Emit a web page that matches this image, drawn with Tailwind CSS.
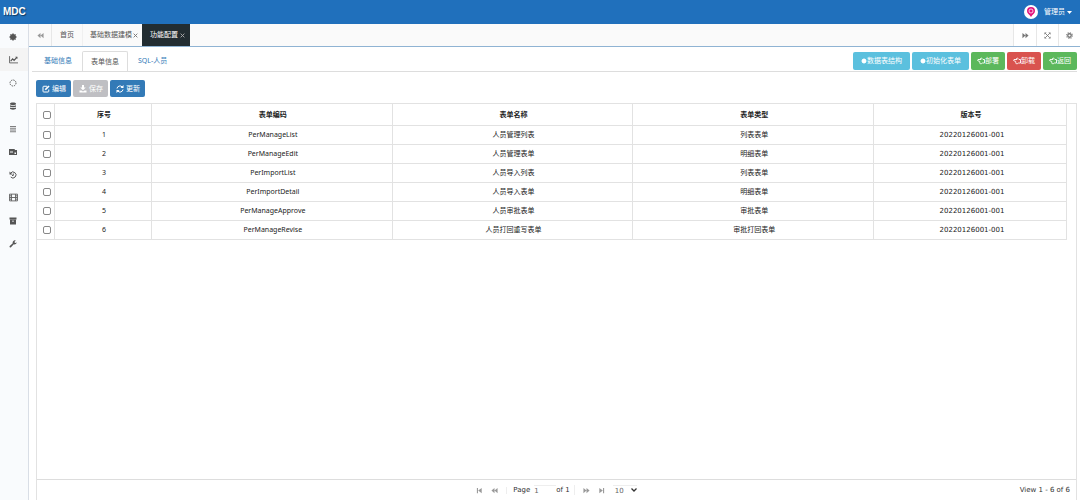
<!DOCTYPE html>
<html lang="zh-CN">
<head>
    <meta charset="UTF-8">
    <link rel="icon" href="data:,">
    <meta name="viewport" content="width=device-width, initial-scale=1.0">
    <title>MDC - 功能配置</title>
    <script src="https://cdn.jsdelivr.net/npm/@tailwindcss/browser@4"></script>
</head>
<body class="h-screen flex flex-col overflow-hidden bg-white text-[7px] leading-[10px] text-[#333] whitespace-nowrap font-['Noto_Sans','Noto_Sans_CJK_SC',sans-serif]">

<!-- Icon sprite -->
<svg class="hidden">
    <symbol id="i-dot" viewBox="0 0 16 16"><circle cx="8" cy="8" r="6" fill="currentColor"/><path d="M8 0v16M0 8h16M2.5 2.5l11 11M13.500 2.500l-11 11" stroke="currentColor" stroke-width="1.500"/></symbol>
    <symbol id="i-chart" viewBox="0 0 16 16" fill="none" stroke="currentColor"><path d="M1 2v12h15" stroke-width="1.500"/><path d="M3 11l3.500-4 2.500 2.500L14 4" stroke-width="2"/><path d="M11 3h4v4z" fill="currentColor" stroke="none"/></symbol>
    <symbol id="i-spin" viewBox="0 0 16 16"><circle cx="8" cy="8" r="6" fill="none" stroke="currentColor" stroke-width="2" stroke-dasharray="2.700 2"/></symbol>
    <symbol id="i-db" viewBox="0 0 16 16" fill="currentColor"><path d="M2 3c0-3 12-3 12 0v1.500c0 2-12 2-12 0zM2 6.500c2 1.500 10 1.500 12 0V9c0 2-12 2-12 0zM2 11c2 1.500 10 1.500 12 0v2c0 3-12 3-12 0z"/></symbol>
    <symbol id="i-bars" viewBox="0 0 16 16" stroke="currentColor" stroke-width="2"><path d="M2 3h12M2 6.500h12M2 10h12M2 13.500h12" stroke-width="1.500"/></symbol>
    <symbol id="i-card" viewBox="0 0 16 16"><path fill="currentColor" fill-rule="evenodd" d="M0 2h11l1 2h4v10H0zM2 6h6v1H2zM2 9h6v1H2zM11 9h3v3h-3z"/></symbol>
    <symbol id="i-history" viewBox="0 0 16 16" fill="none" stroke="currentColor" stroke-width="2"><path d="M3 4.500A6 6 0 1 1 3.500 12M8.500 5v4H6"/><path d="M1 1v6h6z" fill="currentColor" stroke="none"/></symbol>
    <symbol id="i-film" viewBox="0 0 16 16" fill="none" stroke="currentColor" stroke-width="1.500"><path d="M1 2h14v12H1zM4.500 2v12M11.500 2v12M4.500 8h7M1 5h3M1 8h3M1 11h3M12 5h3M12 8h3M12 11h3"/></symbol>
    <symbol id="i-archive" viewBox="0 0 16 16"><path fill="currentColor" fill-rule="evenodd" d="M1 1h14v4H1zM2 5.500h12V15H2zM6 7.500h4V9H6z"/></symbol>
    <symbol id="i-wrench" viewBox="0 0 16 16"><path fill="currentColor" d="M15.500 4.500a4.500 4.500 0 0 1-6 4L4 14.500c-1.500 1.500-4-.5-2.500-2.500l6-5.500a4.500 4.500 0 0 1 6-5.500L11 3.500l.5 2 2 .5z"/></symbol>
    <symbol id="i-backward" viewBox="0 0 16 16" fill="currentColor"><path d="M8 2v12L1 8zM15 2v12L8 8z"/></symbol>
    <symbol id="i-forward" viewBox="0 0 16 16" fill="currentColor"><path d="M8 2v12l7-6zM1 2v12l7-6z"/></symbol>
    <symbol id="i-first" viewBox="0 0 16 16" fill="currentColor"><path d="M2 2h2.500v12H2zM13 2v12L5 8z"/></symbol>
    <symbol id="i-last" viewBox="0 0 16 16" fill="currentColor"><path d="M11.500 2H14v12h-2.500zM3 2v12l8-6z"/></symbol>
    <symbol id="i-expand" viewBox="0 0 16 16"><path d="M3 3l10 10M13 3L3 13" stroke="currentColor" stroke-width="2"/><path fill="currentColor" d="M1 1h5L1 6zM15 1v5l-5-5zM1 15v-5l5 5zM15 15h-5l5-5z"/></symbol>
    <symbol id="i-cog" viewBox="0 0 16 16" fill="none" stroke="currentColor"><circle cx="8" cy="8" r="4" stroke-width="3"/><circle cx="8" cy="8" r="6.500" stroke-width="2.500" stroke-dasharray="2.500 2.600"/></symbol>
    <symbol id="i-x" viewBox="0 0 16 16"><path d="M2 2l12 12M14 2L2 14" stroke="currentColor" stroke-width="3"/></symbol>
    <symbol id="i-edit" viewBox="0 0 16 16" fill="none" stroke="currentColor" stroke-width="2"><path d="M10 2.500H3.500Q2 2.500 2 4v8.500Q2 14 3.500 14H12q1.500 0 1.500-1.500V9"/><path d="M6.500 9.500L14 2" stroke-width="3.500"/></symbol>
    <symbol id="i-save" viewBox="0 0 16 16" fill="currentColor"><path d="M6 0h4v5h3.500L8 10.500 2.500 5H6zM1 11h4l3 2 3-2h4v4H1z"/></symbol>
    <symbol id="i-refresh" viewBox="0 0 16 16" fill="none" stroke="currentColor" stroke-width="2"><path d="M2 7a6 6 0 0 1 10.500-3M14 9a6 6 0 0 1-10.500 3"/><path d="M15 0v6H9zM1 16v-6h6z" fill="currentColor" stroke="none"/></symbol>
    <symbol id="i-hand" viewBox="0 0 16 16"><path d="M2 5h6l-1-2q1-2 2.500-.5L12 5h3v7h-4q-1 1.500-4.500 1.500-1.500-1-1-3T4 8H2Q0 6.500 2 5z" fill="none" stroke="currentColor" stroke-width="1.800"/></symbol>
</svg>

<header class="h-6 shrink-0 flex items-center justify-between bg-[#2070bc] text-white pl-[3px] pr-2">
    <a href="#" class="text-[10px] font-bold font-['Liberation_Sans',sans-serif] text-shadow-[1px_1px_1px_rgb(0_0_0/0.5)]">MDC</a>
    <button type="button" class="flex items-center">
        <svg class="size-[14px] mr-[6px]" viewBox="0 0 28 28"><circle cx="14" cy="14" r="14" fill="#fff"/><path fill="#e2147e" d="M14 4a8 8 0 0 1 8 8c0 5-5 7-8 12-3-5-8-7-8-12a8 8 0 0 1 8-8z"/><circle cx="14" cy="12" r="4" fill="none" stroke="#fff" stroke-width="1.500"/></svg>
        管理员
        <svg class="w-[5px] h-[3px] ml-[2px]" viewBox="0 0 10 6"><path d="M0 0h10L5 6z" fill="currentColor"/></svg>
    </button>
</header>

<div class="flex flex-1 min-h-0">
    <nav class="w-[29px] shrink-0 flex flex-col bg-[#f9fbfd] border-r border-[#d9dee6] pl-[9px] pt-px text-[#555]">
        <a href="#" aria-label="首页" class="h-[23px] flex items-center"><svg class="size-2"><use href="#i-dot"/></svg></a>
        <a href="#" aria-label="统计" class="h-[23px] flex items-center bg-[#f4f4f4] -ml-[9px] pl-[9px]"><svg class="size-[9px]"><use href="#i-chart"/></svg></a>
        <a href="#" aria-label="任务" class="h-[23px] flex items-center"><svg class="size-2"><use href="#i-spin"/></svg></a>
        <a href="#" aria-label="数据" class="h-[23px] flex items-center"><svg class="size-2"><use href="#i-db"/></svg></a>
        <a href="#" aria-label="列表" class="h-[23px] flex items-center"><svg class="size-2"><use href="#i-bars"/></svg></a>
        <a href="#" aria-label="表单" class="h-[23px] flex items-center"><svg class="size-2"><use href="#i-card"/></svg></a>
        <a href="#" aria-label="历史" class="h-[23px] flex items-center"><svg class="size-2"><use href="#i-history"/></svg></a>
        <a href="#" aria-label="媒体" class="h-[23px] flex items-center"><svg class="size-[9px]"><use href="#i-film"/></svg></a>
        <a href="#" aria-label="归档" class="h-[23px] flex items-center"><svg class="size-2"><use href="#i-archive"/></svg></a>
        <a href="#" aria-label="工具" class="h-[23px] flex items-center"><svg class="size-2"><use href="#i-wrench"/></svg></a>
    </nav>

    <main class="flex-1 min-w-0 flex flex-col">
        <!-- Opened pages -->
        <div class="h-[23px] shrink-0 flex bg-[#fafafa] border-b border-[#8fb3d3] text-[#555]">
            <button type="button" aria-label="向左" class="w-[23px] flex items-center justify-center border-r border-[#e7e7e7] text-[#999]"><svg class="size-[7px]"><use href="#i-backward"/></svg></button>
            <a href="#" class="flex items-center px-2">首页</a>
            <a href="#" class="flex items-center gap-px px-1 border-l border-[#f0f0f0]"><span class="pl-[3px]">基础数据建模</span><svg class="size-[5px] text-[#777]"><use href="#i-x"/></svg></a>
            <a href="#" class="flex items-center gap-[2px] pl-2 pr-[5px] bg-[#222d32] text-white">功能配置<svg class="size-[5px] text-[#aaa]"><use href="#i-x"/></svg></a>
            <div class="ml-auto flex bg-white text-[#777]">
                <button type="button" aria-label="向右" class="w-[23px] flex items-center justify-center border-l border-[#e7e7e7]"><svg class="size-[7px]"><use href="#i-forward"/></svg></button>
                <button type="button" aria-label="全屏" class="w-[22px] flex items-center justify-center border-l border-[#e7e7e7]"><svg class="size-[7px]"><use href="#i-expand"/></svg></button>
                <button type="button" aria-label="设置" class="w-[22px] flex items-center justify-center border-l border-[#e7e7e7]"><svg class="size-[7px]"><use href="#i-cog"/></svg></button>
            </div>
        </div>

        <!-- Form tabs and actions -->
        <div class="shrink-0 flex justify-between ml-[3px] mr-[3px] mt-1 border-b border-[#ddd] text-[#337ab7]">
            <div class="flex h-5 -mb-px">
                <a href="#" class="flex items-center px-[10px] ml-[2px]">基础信息</a>
                <a href="#" class="flex items-center px-2 border border-b-0 border-[#ddd] rounded-t-[2px] bg-white text-[#555]">表单信息</a>
                <a href="#" class="flex items-center px-[10px]">SQL-人员</a>
            </div>
            <div class="flex gap-[2px] pt-px pb-px text-white">
                <button type="button" class="h-[18px] flex items-center px-2 rounded-[2px] bg-[#5bc0de]"><svg class="size-[6px]"><use href="#i-dot"/></svg>数据表结构</button>
                <button type="button" class="h-[18px] flex items-center px-2 rounded-[2px] bg-[#5bc0de]"><svg class="size-[6px]"><use href="#i-dot"/></svg>初始化表单</button>
                <button type="button" class="h-[18px] flex items-center px-[6px] rounded-[2px] bg-[#5cb85c]"><svg class="size-2"><use href="#i-hand"/></svg>部署</button>
                <button type="button" class="h-[18px] flex items-center px-[6px] rounded-[2px] bg-[#d9534f]"><svg class="size-2"><use href="#i-hand"/></svg>卸载</button>
                <button type="button" class="h-[18px] flex items-center px-[6px] rounded-[2px] bg-[#5cb85c]"><svg class="size-2"><use href="#i-hand"/></svg>返回</button>
            </div>
        </div>

        <div class="shrink-0 flex gap-[2px] pl-[7px] pt-2 pb-[6px] text-white">
            <button type="button" class="h-[17px] flex items-center gap-[2px] pl-[6px] pr-[5px] rounded-[2px] bg-[#337ab7]"><svg class="size-2"><use href="#i-edit"/></svg>编辑</button>
            <button type="button" class="h-[17px] flex items-center gap-[2px] pl-[6px] pr-[5px] rounded-[2px] bg-[#bfbfc3]" disabled><svg class="size-2"><use href="#i-save"/></svg>保存</button>
            <button type="button" class="h-[17px] flex items-center gap-[2px] pl-[6px] pr-[5px] rounded-[2px] bg-[#337ab7]"><svg class="size-2"><use href="#i-refresh"/></svg>更新</button>
        </div>

        <div class="flex-1 min-h-0 flex flex-col ml-[7px] mr-[3px] border-x border-t border-[#e2e2e2]">
            <div class="flex-1 pr-[9px]">
                <table class="w-full table-fixed border-separate border-spacing-0 text-center text-[#222] [&_td]:border-b [&_td]:border-r [&_td]:border-[#e2e2e2] [&_th]:border-b [&_th]:border-r [&_th]:border-[#e2e2e2] [&_td]:pl-[2px] [&_th]:pl-[2px] [&_td:last-child]:pl-1 [&_td:last-child]:font-['DejaVu_Sans',sans-serif] [&_input]:block [&_input]:mx-auto [&_input]:size-2 [&_input]:appearance-none [&_input]:border [&_input]:border-[#888] [&_input]:rounded-[2px]">
                    <colgroup>
                        <col class="w-[18px]">
                        <col class="w-[97px]">
                        <col>
                        <col>
                        <col>
                        <col class="w-[193px]">
                    </colgroup>
                    <thead>
                    <tr class="h-[22px]">
                        <th><input type="checkbox" aria-label="全选"></th>
                        <th>序号</th>
                        <th>表单编码</th>
                        <th>表单名称</th>
                        <th>表单类型</th>
                        <th>版本号</th>
                    </tr>
                    </thead>
                    <tbody class="[&_tr]:h-[19px]">
                    <tr><td><input type="checkbox" aria-label="选择 1"></td><td>1</td><td>PerManageList</td><td>人员管理列表</td><td>列表表单</td><td>20220126001-001</td></tr>
                    <tr><td><input type="checkbox" aria-label="选择 2"></td><td>2</td><td>PerManageEdit</td><td>人员管理表单</td><td>明细表单</td><td>20220126001-001</td></tr>
                    <tr><td><input type="checkbox" aria-label="选择 3"></td><td>3</td><td>PerImportList</td><td>人员导入列表</td><td>列表表单</td><td>20220126001-001</td></tr>
                    <tr><td><input type="checkbox" aria-label="选择 4"></td><td>4</td><td>PerImportDetail</td><td>人员导入表单</td><td>明细表单</td><td>20220126001-001</td></tr>
                    <tr><td><input type="checkbox" aria-label="选择 5"></td><td>5</td><td>PerManageApprove</td><td>人员审批表单</td><td>审批表单</td><td>20220126001-001</td></tr>
                    <tr><td><input type="checkbox" aria-label="选择 6"></td><td>6</td><td>PerManageRevise</td><td>人员打回重写表单</td><td>审批打回表单</td><td>20220126001-001</td></tr>
                    </tbody>
                </table>
            </div>

            <!-- Pager -->
            <div class="h-[21px] shrink-0 grid grid-cols-[1fr_auto_1fr] items-center border-t border-[#ddd] px-[6px] font-['DejaVu_Sans',sans-serif]">
                <div></div>
                <div class="flex items-center">
                    <div class="flex gap-2 pr-2 border-r border-[#eee] text-[#999]">
                        <button type="button" aria-label="首页"><svg class="size-[7px]"><use href="#i-first"/></svg></button>
                        <button type="button" aria-label="上一页"><svg class="size-[7px]"><use href="#i-backward"/></svg></button>
                    </div>
                    <label class="flex items-center gap-1 pl-[6px]">Page <input type="text" value="1" class="w-[22px] h-[10px] border-t border-[#eee] text-[#666]"></label>
                    <span class="pr-1 border-r border-[#eee]">of 1</span>
                    <div class="flex gap-2 pl-2 text-[#999]">
                        <button type="button" aria-label="下一页"><svg class="size-[7px]"><use href="#i-forward"/></svg></button>
                        <button type="button" aria-label="末页"><svg class="size-[7px]"><use href="#i-last"/></svg></button>
                    </div>
                    <div class="grid items-center ml-2">
                        <select aria-label="每页条数" class="col-start-1 row-start-1 w-6 h-[10px] pl-[2px] appearance-none border-t border-[#eee] text-[#666]">
                            <option>10</option>
                            <option>20</option>
                            <option>50</option>
                        </select>
                        <svg class="col-start-1 row-start-1 justify-self-end w-[6px] h-1 pointer-events-none" viewBox="0 0 12 8"><path d="M1 1l5 5 5-5" fill="none" stroke="#333" stroke-width="2.500"/></svg>
                    </div>
                </div>
                <div class="text-right">View 1 - 6 of 6</div>
            </div>
        </div>
    </main>
</div>
</body>
</html>
